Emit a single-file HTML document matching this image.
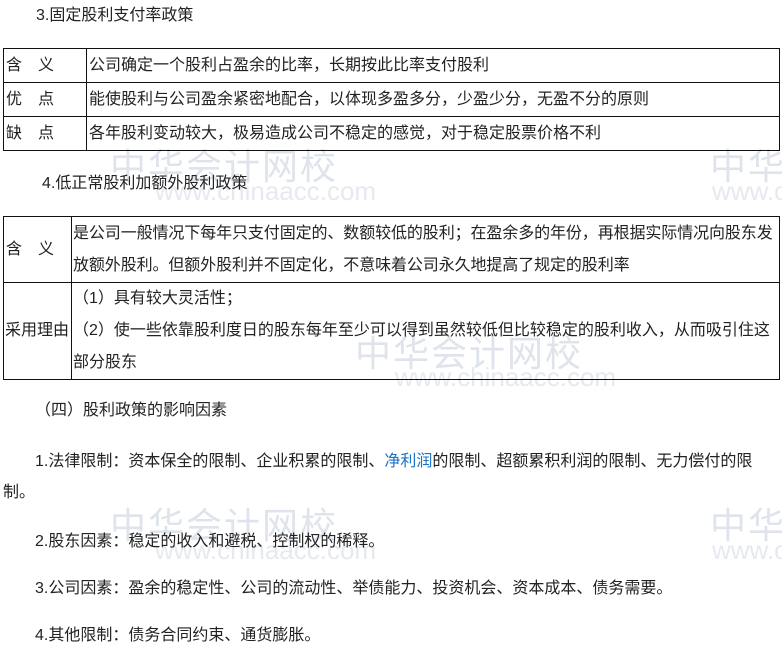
<!DOCTYPE html>
<html><head><meta charset="utf-8"><style>
body{margin:0;width:782px;height:655px;background:#fff;position:relative;overflow:hidden;font-family:"Liberation Sans","Noto Sans CJK SC",sans-serif;font-size:16px;color:#222;}
.a{position:absolute;white-space:nowrap;line-height:20px;}
.wm{position:absolute;color:#dfe4ec;font-size:36px;white-space:nowrap;letter-spacing:2px;overflow:hidden;}
.wm2{position:absolute;color:#e6e9ef;font-size:26px;white-space:nowrap;overflow:hidden;}
table{position:absolute;border-collapse:collapse;}
td{border:1px solid #111;padding:0 2px;vertical-align:middle;line-height:32px;white-space:nowrap;}
</style></head><body>
<div class="wm" style="left:110px;top:138px">中华会计网校</div><div class="wm2" style="left:155px;top:176px">www.chinaacc.com</div>
<div class="wm" style="left:710px;top:138px;width:72px">中华会</div><div class="wm2" style="left:712px;top:176px;width:70px">www.chi</div>
<div class="wm" style="left:355px;top:325px">中华会计网校</div><div class="wm2" style="left:395px;top:362px">www.chinaacc.com</div>
<div class="wm" style="left:110px;top:497px">中华会计网校</div><div class="wm2" style="left:155px;top:535px">www.chinaacc.com</div>
<div class="wm" style="left:710px;top:497px;width:72px">中华会</div><div class="wm2" style="left:712px;top:535px;width:70px">www.chi</div>

<div class="a" style="left:36px;top:6px">3.固定股利支付率政策</div>
<table style="left:3px;top:48px;width:777px">
<tr style="height:34px"><td style="width:78px">含&emsp;义</td><td>公司确定一个股利占盈余的比率，长期按此比率支付股利</td></tr>
<tr style="height:34px"><td>优&emsp;点</td><td>能使股利与公司盈余紧密地配合，以体现多盈多分，少盈少分，无盈不分的原则</td></tr>
<tr style="height:34px"><td>缺&emsp;点</td><td>各年股利变动较大，极易造成公司不稳定的感觉，对于稳定股票价格不利</td></tr>
</table>
<div class="a" style="left:42px;top:174px">4.低正常股利加额外股利政策</div>
<table style="left:3px;top:216px;width:777px">
<tr style="height:66px"><td style="width:63px">含&emsp;义</td><td style="padding:0 0 0 1px;letter-spacing:-0.1px">是公司一般情况下每年只支付固定的、数额较低的股利；在盈余多的年份，再根据实际情况向股东发<br>放额外股利。但额外股利并不固定化，不意味着公司永久地提高了规定的股利率</td></tr>
<tr style="height:97px"><td style="padding:0 1px">采用理由</td><td style="padding:0 0 0 1px">（1）具有较大灵活性；<br>（2）使一些依靠股利度日的股东每年至少可以得到虽然较低但比较稳定的股利收入，从而吸引住这<br>部分股东</td></tr>
</table>
<div class="a" style="left:35px;top:401px">（四）股利政策的影响因素</div>
<div class="a" style="left:35px;top:452px">1.法律限制：资本保全的限制、企业积累的限制、<span style="color:#1a73c8">净利润</span>的限制、超额累积利润的限制、无力偿付的限</div>
<div class="a" style="left:3px;top:483px">制。</div>
<div class="a" style="left:35px;top:532px">2.股东因素：稳定的收入和避税、控制权的稀释。</div>
<div class="a" style="left:35px;top:579px">3.公司因素：盈余的稳定性、公司的流动性、举债能力、投资机会、资本成本、债务需要。</div>
<div class="a" style="left:35px;top:626px">4.其他限制：债务合同约束、通货膨胀。</div>
</body></html>
